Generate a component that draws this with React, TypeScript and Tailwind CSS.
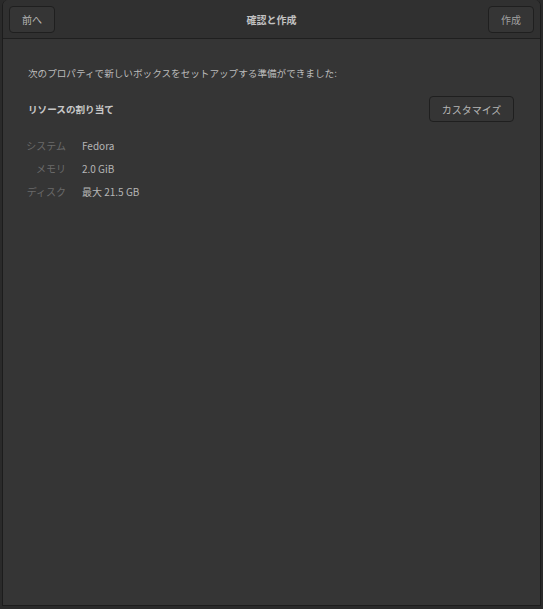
import React from "react";

export default function App() {
  const font = { fontFamily: '"Noto Sans CJK JP", "Noto Sans", sans-serif' };
  return (
    <div className="w-[543px] h-[609px] bg-[#2a2a2a] flex" style={font}>
      <div className="flex-1 flex flex-col ml-[2px] mr-[2px] mb-[3px] border border-t-0 border-[#1c1c1c] rounded-t-[6px] bg-[#353535] overflow-hidden">
        <div className="h-[39px] shrink-0 flex items-center justify-between px-[6px] bg-[#303030] border-b border-[#1f1f1f] relative">
          <button className="w-[46px] h-[27px] rounded-[4px] border border-[#1f1f1f] bg-[#353535] text-[10px] text-[#b5b5b5] flex items-center justify-center">
            前へ
          </button>
          <div className="absolute left-0 right-0 top-0 h-[39px] flex items-center justify-center pointer-events-none">
            <span className="text-[10px] font-bold text-[#c2c2c2]">確認と作成</span>
          </div>
          <button className="w-[46px] h-[27px] rounded-[4px] border border-[#1f1f1f] bg-[#353535] text-[10px] text-[#a0a0a0] flex items-center justify-center">
            作成
          </button>
        </div>
        <div className="flex flex-col px-[25px] pt-[27px]">
          <p className="text-[9.6px] text-[#bcbcbc] leading-[14px]">
            次のプロパティで新しいボックスをセットアップする準備ができました:
          </p>
          <div className="flex items-center justify-between mt-[16px]">
            <span className="text-[9.6px] font-bold text-[#c8c8c8]">リソースの割り当て</span>
            <button className="w-[85px] h-[26px] rounded-[4px] border border-[#1f1f1f] bg-[#353535] text-[10px] text-[#b5b5b5] flex items-center justify-center mr-[1px]">
              カスタマイズ
            </button>
          </div>
          <div className="grid grid-cols-[38px_1fr] gap-x-[16px] gap-y-[8px] mt-[16px] text-[10px] leading-[15px]">
            <span className="justify-self-end whitespace-nowrap text-[#6a6a6a]">システム</span>
            <span className="whitespace-nowrap text-[#b5b5b5]">Fedora</span>
            <span className="justify-self-end whitespace-nowrap text-[#6a6a6a]">メモリ</span>
            <span className="whitespace-nowrap text-[#b5b5b5]">2.0 GiB</span>
            <span className="justify-self-end whitespace-nowrap text-[#6a6a6a]">ディスク</span>
            <span className="whitespace-nowrap text-[#b5b5b5]">最大 21.5 GB</span>
          </div>
        </div>
      </div>
    </div>
  );
}
